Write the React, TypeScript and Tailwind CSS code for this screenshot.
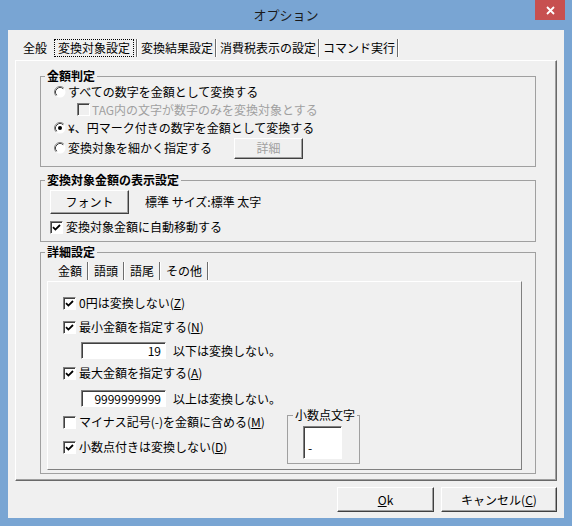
import type { ReactNode } from "react";

function Radio({ checked }: { checked?: boolean }) {
  return (
    <svg width="12" height="12" viewBox="0 0 12 12" className="shrink-0">
      <circle cx="6" cy="6" r="5.5" fill="#fff" />
      <path d="M2.11 9.89 A5.5 5.5 0 0 1 9.89 2.11" fill="none" stroke="#808080" strokeWidth="1" />
      <path d="M2.82 9.18 A4.5 4.5 0 0 1 9.18 2.82" fill="none" stroke="#404040" strokeWidth="1" />
      {checked && <circle cx="6" cy="6" r="2" fill="#000" />}
    </svg>
  );
}

function Check({ checked, disabled }: { checked?: boolean; disabled?: boolean }) {
  return (
    <span
      className={`w-[13px] h-[13px] shrink-0 flex items-center justify-center border border-t-[#808080] border-l-[#808080] border-r-white border-b-white shadow-[inset_1px_1px_0_#404040] ${
        disabled ? "bg-[#f0f0f0]" : "bg-white"
      }`}
    >
      {checked && (
        <svg width="9" height="9" viewBox="0 0 9 9">
          <path d="M1 4.2 L3.4 6.6 L8 2" stroke="#000" strokeWidth="1.8" fill="none" />
        </svg>
      )}
    </span>
  );
}

function Btn({ children, className = "" }: { children: ReactNode; className?: string }) {
  return (
    <div
      className={`flex items-center justify-center bg-[#f0f0f0] border border-t-white border-l-white border-r-[#404040] border-b-[#404040] shadow-[inset_-1px_-1px_0_#a0a0a0] ${className}`}
    >
      {children}
    </div>
  );
}

function Sep() {
  return <span className="ml-[2px] w-[2px] h-[18px] border-l border-l-[#6d6d6d] border-r border-r-white" />;
}

function InnerSep() {
  return <span className="ml-[5px] w-[2px] h-[18px] border-l border-l-[#6d6d6d] border-r border-r-white" />;
}

function Field({ value, className = "" }: { value: string; className?: string }) {
  return (
    <div
      className={`bg-white border border-t-[#808080] border-l-[#808080] border-r-white border-b-white shadow-[inset_1px_1px_0_#404040] flex items-center justify-end pr-[4px] ${className}`}
    >
      {value}
    </div>
  );
}

export default function App() {
  return (
    <div className="w-[572px] h-[526px] bg-[#79a5d3] flex flex-col overflow-hidden whitespace-nowrap text-[12px] leading-[14px] text-black font-['Noto_Sans_CJK_JP','Noto_Sans',sans-serif]">
      {/* title bar */}
      <div className="h-[30px] grid grid-cols-[1fr_auto_1fr]">
        <div />
        <div className="pt-[8px] text-[13px] text-[#1a1a1a]">オプション</div>
        <div className="flex justify-end pr-[7px]">
          <div className="w-[30px] h-[20px] bg-[#c75050] flex items-center justify-center">
            <svg width="9" height="9" viewBox="0 0 9 9">
              <path d="M1 1 L8 8 M8 1 L1 8" stroke="#fff" strokeWidth="1.8" />
            </svg>
          </div>
        </div>
      </div>

      {/* client */}
      <div className="mx-[8px] h-[488px] bg-[#f0f0f0] flex flex-col">
        {/* tabs */}
        <div className="mt-[8px] h-[20px] flex items-center pl-[15px]">
          <span>全般</span>
          <span className="ml-[7px] h-[18px] px-[3px] flex items-center border border-dotted border-black">変換対象設定</span>
          <Sep />
          <span className="ml-[3px]">変換結果設定</span>
          <Sep />
          <span className="ml-[3px]">消費税表示の設定</span>
          <Sep />
          <span className="ml-[3px]">コマンド実行</span>
          <Sep />
        </div>

        {/* tab panel */}
        <div className="mt-[2px] ml-[7px] w-[542px] h-[421px] border border-t-white border-l-white border-r-[#696969] border-b-[#696969] shadow-[inset_-1px_-1px_0_#a0a0a0] flex flex-col">
          {/* 金額判定 */}
          <fieldset className="mt-[8px] ml-[24px] w-[496px] h-[98px] border border-[#a0a0a0]">
            <legend className="ml-[4px] px-[2px] font-bold leading-[14px]">金額判定</legend>
            <div className="flex flex-col pl-[13px]">
              <div className="h-[18px] flex items-center">
                <Radio />
                <span className="ml-[2px]">すべての数字を金額として変換する</span>
              </div>
              <div className="h-[17px] flex items-center ml-[23px] text-[#a0a0a0]">
                <Check disabled />
                <span className="ml-[2px]">TAG内の文字が数字のみを変換対象とする</span>
              </div>
              <div className="mt-[1px] h-[18px] flex items-center">
                <Radio checked />
                <span className="ml-[2px]">¥、円マーク付きの数字を金額として変換する</span>
              </div>
              <div className="h-[22px] flex items-center">
                <Radio />
                <span className="ml-[2px]">変換対象を細かく指定する</span>
                <Btn className="ml-[22px] w-[69px] h-[21px] text-[#a0a0a0]">詳細</Btn>
              </div>
            </div>
          </fieldset>

          {/* 変換対象金額の表示設定 */}
          <fieldset className="mt-[6px] ml-[24px] w-[496px] h-[69px] border border-[#a0a0a0]">
            <legend className="ml-[4px] px-[2px] font-bold leading-[14px]">変換対象金額の表示設定</legend>
            <div className="flex flex-col pl-[9px]">
              <div className="mt-[3px] flex items-center">
                <Btn className="w-[79px] h-[24px]">フォント</Btn>
                <span className="ml-[16px]">標準 サイズ:標準 太字</span>
              </div>
              <div className="mt-[5px] h-[16px] flex items-center">
                <Check checked />
                <span className="ml-[3px]">変換対象金額に自動移動する</span>
              </div>
            </div>
          </fieldset>

          {/* 詳細設定 */}
          <fieldset className="mt-[3px] ml-[24px] w-[496px] h-[229px] border border-[#a0a0a0]">
            <legend className="ml-[4px] px-[2px] font-bold leading-[14px]">詳細設定</legend>
            <div className="mt-[2px] h-[20px] flex items-center pl-[17px]">
              <span>金額</span>
              <InnerSep />
              <span className="ml-[5px]">語頭</span>
              <InnerSep />
              <span className="ml-[5px]">語尾</span>
              <InnerSep />
              <span className="ml-[5px]">その他</span>
              <InnerSep />
            </div>
            <div className="ml-[6px] w-[475px] h-[189px] border border-t-white border-l-white border-r-[#808080] border-b-[#808080] flex flex-col">
              <div className="mt-[13px] h-[16px] pl-[15px] flex items-center">
                <Check checked />
                <span className="ml-[3px]">
                  0円は変換しない(<span className="underline">Z</span>)
                </span>
              </div>
              <div className="mt-[8px] h-[16px] pl-[15px] flex items-center">
                <Check checked />
                <span className="ml-[3px]">
                  最小金額を指定する(<span className="underline">N</span>)
                </span>
              </div>
              <div className="mt-[7px] h-[17px] pl-[33px] flex items-center">
                <Field value="19" className="w-[85px] h-[17px]" />
                <span className="ml-[7px]">以下は変換しない。</span>
              </div>
              <div className="mt-[6px] h-[16px] pl-[15px] flex items-center">
                <Check checked />
                <span className="ml-[3px]">
                  最大金額を指定する(<span className="underline">A</span>)
                </span>
              </div>
              <div className="mt-[9px] h-[17px] pl-[33px] flex items-center">
                <Field value="9999999999" className="w-[85px] h-[17px]" />
                <span className="ml-[7px]">以上は変換しない。</span>
              </div>
              <div className="mt-[1px] flex">
                <div className="w-[239px] pl-[15px] flex flex-col">
                  <div className="mt-[6px] h-[16px] flex items-center">
                    <Check />
                    <span className="ml-[3px]">
                      マイナス記号(-)を金額に含める(<span className="underline">M</span>)
                    </span>
                  </div>
                  <div className="mt-[9px] h-[16px] flex items-center">
                    <Check checked />
                    <span className="ml-[3px]">
                      小数点付きは変換しない(<span className="underline">D</span>)
                    </span>
                  </div>
                </div>
                <fieldset className="w-[73px] h-[56px] border border-[#a0a0a0]">
                  <legend className="ml-[5px] px-[2px] leading-[14px]">小数点文字</legend>
                  <div className="mt-[4px] ml-[15px] w-[39px] h-[33px] bg-white border border-t-[#808080] border-l-[#808080] border-r-white border-b-white shadow-[inset_1px_1px_0_#404040] flex items-center pl-[4px] pt-[10px]">
                    -
                  </div>
                </fieldset>
              </div>
            </div>
          </fieldset>
        </div>

        {/* buttons */}
        <div className="mt-[6px] flex">
          <Btn className="ml-[329px] w-[97px] h-[25px]">
            <span>
              <span className="underline">O</span>k
            </span>
          </Btn>
          <Btn className="ml-[7px] w-[116px] h-[25px]">
            <span>
              キャンセル(<span className="underline">C</span>)
            </span>
          </Btn>
        </div>
      </div>
    </div>
  );
}
